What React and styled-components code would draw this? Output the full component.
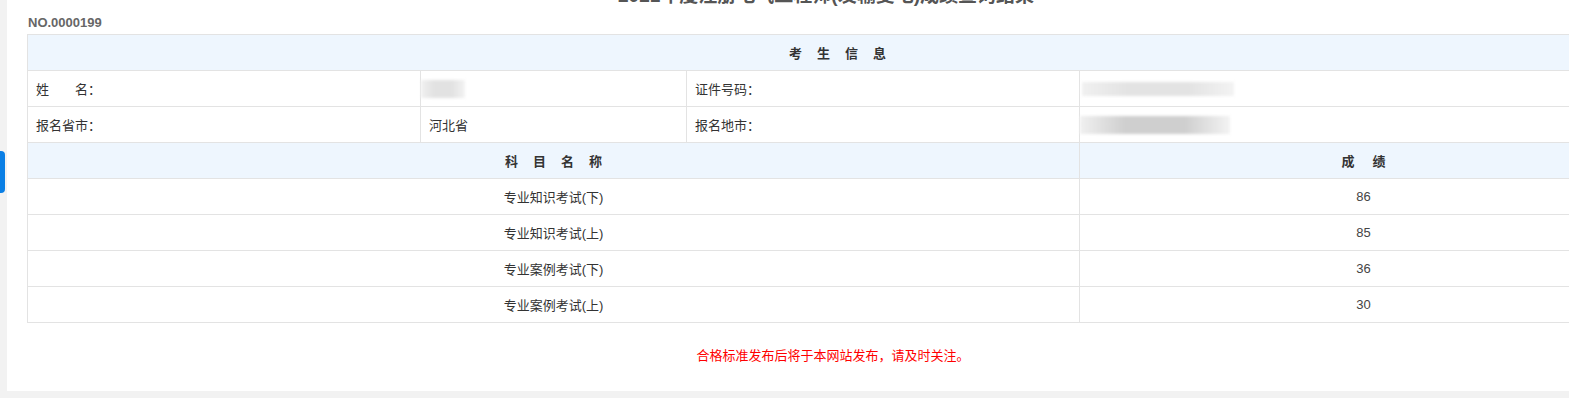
import React from 'react'
import styled, { createGlobalStyle } from 'styled-components'

const GlobalStyle = createGlobalStyle`
    html, body {
        margin: 0;
        padding: 0;
        background: #f2f2f2;
        overflow: hidden;
    }
    body {
        font-family: "Liberation Sans", "Noto Sans CJK SC", sans-serif;
        color: #333;
    }
`

const scores = [
    { name: '专业知识考试(下)', score: 86 },
    { name: '专业知识考试(上)', score: 85 },
    { name: '专业案例考试(下)', score: 36 },
    { name: '专业案例考试(上)', score: 30 },
]

export default function App() {
  return (
    <>
    <GlobalStyle />
    <Page>
        <SideTab />
        <Panel>
            <Title>2021年度注册电气工程师(发输变电)成绩查询结果</Title>
            <SerialNo>NO.0000199</SerialNo>

            <ResultTable>
                <colgroup>
                    <col style={{ width: 393 }} />
                    <col style={{ width: 266 }} />
                    <col style={{ width: 393 }} />
                    <col style={{ width: 568 }} />
                </colgroup>
                <tbody>
                    <tr>
                        <HeadCell colSpan={4} $spacing={15}>考生信息</HeadCell>
                    </tr>
                    <tr>
                        <Cell>姓　　名：</Cell>
                        <Cell>
                            <Blur $w={44} $h={18} $tone="#e2e2e2" />
                        </Cell>
                        <Cell>证件号码：</Cell>
                        <Cell>
                            <Blur $w={152} $h={14} $tone="#e3e3e3" $shift={-6} />
                        </Cell>
                    </tr>
                    <tr>
                        <Cell>报名省市：</Cell>
                        <Cell>河北省</Cell>
                        <Cell>报名地市：</Cell>
                        <Cell>
                            <Blur $w={150} $h={18} $tone="#cfcfcf" />
                        </Cell>
                    </tr>
                    <tr>
                        <HeadCell colSpan={3} $spacing={15}>科目名称</HeadCell>
                        <HeadCell $spacing={18}>成绩</HeadCell>
                    </tr>
                    {scores.map((row) => (
                        <tr key={row.name}>
                            <Cell colSpan={3} $center>{row.name}</Cell>
                            <Cell $center $muted>{row.score}</Cell>
                        </tr>
                    ))}
                </tbody>
            </ResultTable>

            <Notice>合格标准发布后将于本网站发布，请及时关注。</Notice>
        </Panel>
    </Page>
    </>
  )
}

const Page = styled.div`
    position: relative;
    padding: 0 0 8px 7px;
    width: 1700px;
`

const SideTab = styled.div`
    position: absolute;
    left: 0;
    top: 170px;
    width: 5px;
    height: 42px;
    background: #0a7fe5;
    border-radius: 0 4px 4px 0;
`

const Panel = styled.div`
    width: 1620px;
    background: #fff;
    padding: 0 20px 25px 20px;
    margin-top: -19px;
`

const Title = styled.h2`
    margin: 0;
    height: 26px;
    line-height: 30px;
    font-size: 19px;
    font-weight: bold;
    color: #555;
    text-align: center;
    padding-right: 22px;
    white-space: nowrap;
`

const SerialNo = styled.div`
    height: 27px;
    line-height: 20px;
    padding-top: 6px;
    box-sizing: border-box;
    padding-left: 1px;
    font-size: 13px;
    font-weight: bold;
    color: #666;
`

const ResultTable = styled.table`
    width: 1620px;
    table-layout: fixed;
    border-collapse: collapse;
    font-size: 13px;
`

const Cell = styled.td`
    height: 35px;
    padding: 0 8px;
    border: 1px solid #e3e3e3;
    text-align: ${(p) => (p.$center ? 'center' : 'left')};
    color: ${(p) => (p.$muted ? '#444' : '#333')};
    vertical-align: middle;
    white-space: nowrap;
`

const HeadCell = styled.td`
    height: 35px;
    padding: 0 0 0 ${(p) => p.$spacing}px;
    border: 1px solid #e3e3e3;
    background: #eef6fe;
    text-align: center;
    font-weight: bold;
    color: #333;
    letter-spacing: ${(p) => p.$spacing}px;
`

const Blur = styled.span`
    display: inline-block;
    vertical-align: middle;
    width: ${(p) => p.$w}px;
    height: ${(p) => p.$h}px;
    margin-left: ${(p) => p.$shift || -8}px;
    background: linear-gradient(90deg, #f0f0f0 0%, ${(p) => p.$tone} 30%, ${(p) => p.$tone} 70%, #f3f3f3 100%);
    filter: blur(1.5px);
`

const Notice = styled.p`
    margin: 23px 0 0 0;
    line-height: 20px;
    font-size: 13px;
    color: #ff0000;
    text-align: center;
    padding-right: 8px;
`
